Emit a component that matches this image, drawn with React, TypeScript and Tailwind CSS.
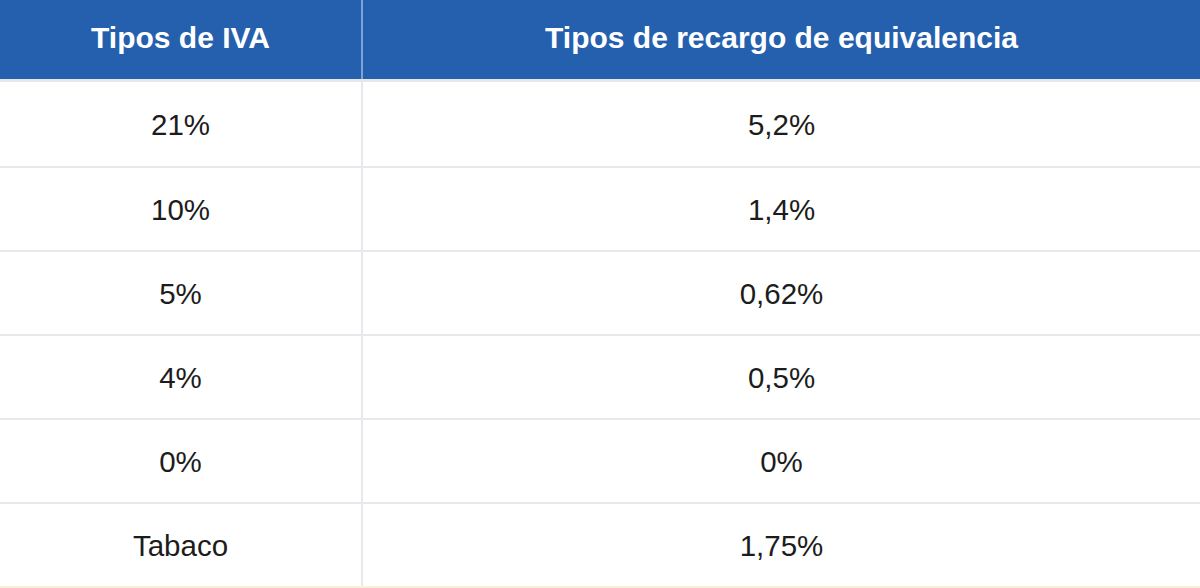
import React from "react";

const rows = [
  { iva: "21%", recargo: "5,2%" },
  { iva: "10%", recargo: "1,4%" },
  { iva: "5%", recargo: "0,62%" },
  { iva: "4%", recargo: "0,5%" },
  { iva: "0%", recargo: "0%" },
  { iva: "Tabaco", recargo: "1,75%" },
];

export default function App() {
  return (
    <div className="w-[1200px] h-[588px] bg-white font-['Liberation_Sans',Arial,sans-serif] overflow-hidden">
      <div className="flex h-[82px] bg-[#2560ae] border-b-[3px] border-[#e4e7eb]">
        <div className="flex w-[361px] items-center justify-center pb-[4px] text-[30px] font-bold text-white">
          Tipos de IVA
        </div>
        <div className="w-[2px] bg-[#7fa3d6]" />
        <div className="flex flex-1 items-center justify-center pb-[4px] text-[30px] font-bold text-white">
          Tipos de recargo de equivalencia
        </div>
      </div>
      {rows.map((r, i) => (
        <div
          key={r.iva}
          className={
            i === 0
              ? "flex h-[86px] border-b-2 border-[#e6e8eb]"
              : i === rows.length - 1
              ? "flex h-[84px] border-b-2 border-[#fcf0d4]"
              : "flex h-[84px] border-b-2 border-[#e6e8eb]"
          }
        >
          <div className="flex w-[361px] items-center justify-center pt-[3px] text-[29.5px] text-[#1c1c1c]">
            {r.iva}
          </div>
          <div className="w-[2px] bg-[#e6e8eb]" />
          <div className="flex flex-1 items-center justify-center pt-[3px] text-[29.5px] text-[#1c1c1c]">
            {r.recargo}
          </div>
        </div>
      ))}
    </div>
  );
}
